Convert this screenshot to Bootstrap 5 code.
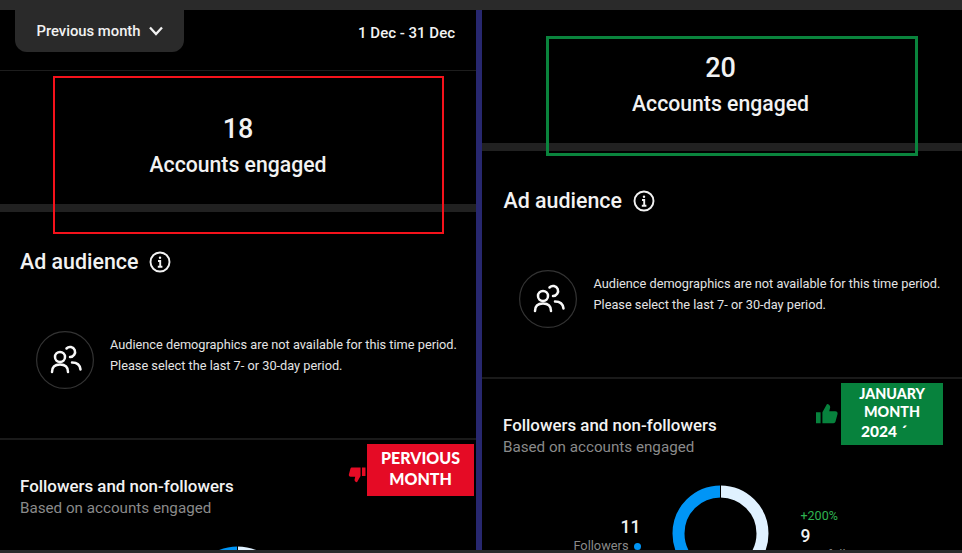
<!DOCTYPE html>
<html lang="en">
<head>
  <meta charset="UTF-8" />
  <meta name="viewport" content="width=device-width, initial-scale=1.0"/>
  <title>Accounts engaged - comparison</title>
  <link href="https://cdn.jsdelivr.net/npm/bootstrap@5.3.3/dist/css/bootstrap.min.css" rel="stylesheet">
  <style>
    html, body { height: 553px; overflow: hidden; background: #000; }
    body { font-family: Roboto, "Liberation Sans", sans-serif; color: #f2f2f2; }
    .edge-top { height: 10px; background: #2a2a2a; flex: none; }
    .edge-bottom { height: 3px; background: #2a2a2a; flex: none; }
    .panels { height: 540px; }
    .panel-left { width: 476px; flex: none; }
    .panel-gap { width: 6px; flex: none; background: #27276f; }
    .panel-right { flex: 1 1 0; min-width: 0; }

    .range-head { height: 61px; border-bottom: 1px solid #1d1d1d; padding: 0 21px 0 15px; }
    .range-btn { width: 169px; height: 42px; background: #2a2a2a; color: #f2f2f2; border: 0; border-radius: 0 0 12px 12px; font-size: 14.8px; font-weight: 500; }
    .range-date { font-size: 15px; font-weight: 500; line-height: 20px; margin-top: 13px; }

    .stat-block { height: 133px; padding-top: 44px; text-align: center; }
    .panel-right .stat-block { padding-right: 3px; }
    .stat-num { font-size: 27px; font-weight: 500; line-height: 28px; }
    .stat-label { font-size: 21.2px; font-weight: 500; line-height: 28px; margin-top: 8px; }
    .thick-rule { height: 8px; background: #212121; }

    .audience { height: 228px; padding: 38px 20px 0 20px; border-bottom: 2px solid #1a1a1a; }
    .panel-right .audience { padding-left: 21.5px; }
    .audience-title { font-size: 21.4px; font-weight: 500; line-height: 24px; gap: 11px; }
    .audience-row { margin: 57px 0 0 16px; gap: 16px; }
    .panel-right .audience-row { margin-left: 15px; gap: 17px; }
    .audience-text { font-size: 12.75px; line-height: 21px; color: #e4e4e4; white-space: nowrap; margin-top: 3px; }

    .followers { padding: 35px 20px 0 20px; }
    .panel-right .followers { padding-left: 21px; }
    .followers-title { font-size: 16.9px; font-weight: 500; line-height: 22px; }
    .followers-sub { font-size: 15.2px; line-height: 22px; color: #8a8a8a; }

    .donut-row { height: 100px; margin-top: 27px; }
    .donut-left { width: 137.5px; padding-top: 32px; text-align: right; }
    .donut-right { padding: 21px 0 0 32px; }
    .donut-num { font-size: 17.5px; font-weight: 500; line-height: 20px; }
    .donut-key { font-size: 12.8px; line-height: 17px; color: #8a8a8a; white-space: nowrap; }
    .donut-dot { display: inline-block; width: 7px; height: 7px; border-radius: 50%; background: #0095f6; margin-left: 5px; }
    .donut-up { font-size: 12.5px; line-height: 20px; color: #2fb350; }
    .donut-chart { margin-left: 31px; flex: none; }

    .mark-box { position: absolute; }
    .mark-red { left: 53px; top: 66px; width: 391px; height: 158px; border: 2px solid #f5121b; }
    .mark-green { left: 64px; top: 26px; width: 372px; height: 120px; border: 3px solid #0a843d; }
    .tag-text { position: absolute; color: #fff; font-family: Lato, sans-serif; font-weight: 900; text-align: center; }
    .tag-red { left: 367px; top: 434px; width: 107px; height: 52px; background: #e50b25; font-size: 16px; line-height: 20.5px; padding-top: 4px; }
    .tag-green { left: 359px; top: 373px; width: 102px; height: 62px; background: #07823d; font-size: 14.3px; line-height: 18.3px; padding-top: 2px; }
    .tag-line-left { display: block; text-align: left; padding-left: 20px; font-size: 15.5px; }
    .thumb-mark { position: absolute; }
    .thumb-down { left: 347.5px; top: 456px; transform: rotate(180deg); }
    .thumb-up { left: 334px; top: 393px; }
  </style>
</head>
<body class="d-flex flex-column">
  <div class="edge-top"></div>

  <div class="panels d-flex">
    <!-- previous month -->
    <div class="panel-left position-relative overflow-hidden">
      <div class="range-head d-flex justify-content-between align-items-start">
        <button type="button" class="range-btn d-flex align-items-center justify-content-center gap-2 p-0">
          Previous month
          <svg width="14" height="10" viewBox="0 0 14 10" fill="none" stroke="#f2f2f2" stroke-width="2.3"><path d="M1 1.500l6 6.500 6-6.500"/></svg>
        </button>
        <span class="range-date">1 Dec - 31 Dec</span>
      </div>
      <div class="stat-block">
        <div class="stat-num">18</div>
        <div class="stat-label">Accounts engaged</div>
      </div>
      <div class="thick-rule"></div>
      <div class="audience">
        <div class="audience-title d-flex align-items-center">
          Ad audience
          <svg width="22" height="22" viewBox="0 0 22 22" fill="none" stroke="#f2f2f2" stroke-width="1.9"><circle cx="11" cy="11" r="9.500"/><path d="M9 10h2.200v5.500M8.800 15.700h4.600"/><circle cx="11" cy="6.800" r="1.200" fill="#f2f2f2" stroke="none"/></svg>
        </div>
        <div class="audience-row d-flex align-items-start">
          <svg class="flex-shrink-0" width="58" height="58" viewBox="0 0 58 58" fill="none" stroke="#f8f8f8" stroke-width="2.500" stroke-linecap="round"><circle cx="29" cy="29" r="28.400" stroke="#333" stroke-width="1.200"/><circle cx="24" cy="26" r="5"/><path d="M16 41c0-5 3-7.500 8-7.500s8 2.500 8 7.500"/><path d="M30.500 17.500a5 5 0 1 1 3.500 8.500"/><path d="M36 31.500c5 0 8 2.500 8.500 7"/></svg>
          <div class="audience-text">Audience demographics are not available for this time period.<br>Please select the last 7- or 30-day period.</div>
        </div>
      </div>
      <div class="followers">
        <div class="followers-title">Followers and non-followers</div>
        <div class="followers-sub">Based on accounts engaged</div>
        <div class="donut-row d-flex">
          <div class="donut-left"></div>
          <svg class="donut-chart" width="97" height="97" viewBox="0 0 97 97" fill="none" stroke-width="12"><path d="M48.500 6.500a42 42 0 0 1 0 84" stroke="#e0f1ff"/><path d="M48.500 90.500a42 42 0 0 1 0-84" stroke="#0095f6"/><path d="M48.500 0v13" stroke="#000" stroke-width="1"/></svg>
        </div>
      </div>
      <div class="mark-box mark-red"></div>
      <div class="tag-text tag-red">PERVIOUS<br>MONTH</div>
      <svg class="thumb-mark thumb-down" width="18" height="17" viewBox="0 0 24 24" fill="#e50b25"><path d="M0 10h5v12H0zM7 10l5-9c2 0 3.500 1.500 3.500 3.500L14.500 9H21c1.800 0 2.900 1.300 2.500 3l-2.200 8.200c-.3 1.100-1.200 1.800-2.300 1.800H7z"/></svg>
    </div>

    <div class="panel-gap"></div>

    <!-- January 2024 -->
    <div class="panel-right position-relative overflow-hidden">
      <div class="stat-block">
        <div class="stat-num">20</div>
        <div class="stat-label">Accounts engaged</div>
      </div>
      <div class="thick-rule"></div>
      <div class="audience">
        <div class="audience-title d-flex align-items-center">
          Ad audience
          <svg width="22" height="22" viewBox="0 0 22 22" fill="none" stroke="#f2f2f2" stroke-width="1.9"><circle cx="11" cy="11" r="9.500"/><path d="M9 10h2.200v5.500M8.800 15.700h4.600"/><circle cx="11" cy="6.800" r="1.200" fill="#f2f2f2" stroke="none"/></svg>
        </div>
        <div class="audience-row d-flex align-items-start">
          <svg class="flex-shrink-0" width="58" height="58" viewBox="0 0 58 58" fill="none" stroke="#f8f8f8" stroke-width="2.500" stroke-linecap="round"><circle cx="29" cy="29" r="28.400" stroke="#333" stroke-width="1.200"/><circle cx="24" cy="26" r="5"/><path d="M16 41c0-5 3-7.500 8-7.500s8 2.500 8 7.500"/><path d="M30.500 17.500a5 5 0 1 1 3.500 8.500"/><path d="M36 31.500c5 0 8 2.500 8.500 7"/></svg>
          <div class="audience-text">Audience demographics are not available for this time period.<br>Please select the last 7- or 30-day period.</div>
        </div>
      </div>
      <div class="followers">
        <div class="followers-title">Followers and non-followers</div>
        <div class="followers-sub">Based on accounts engaged</div>
        <div class="donut-row d-flex">
          <div class="donut-left">
            <div class="donut-num">11</div>
            <div class="donut-key">Followers<span class="donut-dot"></span></div>
          </div>
          <svg class="donut-chart" width="97" height="97" viewBox="0 0 97 97" fill="none" stroke-width="12"><path d="M48.500 6.500a42 42 0 0 1 0 84" stroke="#e0f1ff"/><path d="M48.500 90.500a42 42 0 0 1 0-84" stroke="#0095f6"/><path d="M48.500 0v13" stroke="#000" stroke-width="1"/></svg>
          <div class="donut-right">
            <div class="donut-up">+200%</div>
            <div class="donut-num">9</div>
            <div class="donut-key">Non-followers</div>
          </div>
        </div>
      </div>
      <div class="mark-box mark-green"></div>
      <div class="tag-text tag-green">JANUARY<br>MONTH<br><span class="tag-line-left">2024 ´</span></div>
      <svg class="thumb-mark thumb-up" width="22" height="22" viewBox="0 0 24 24" fill="#07823d"><path d="M0 10h5v12H0zM7 10l5-9c2 0 3.500 1.500 3.500 3.500L14.500 9H21c1.800 0 2.900 1.300 2.500 3l-2.200 8.200c-.3 1.100-1.200 1.800-2.300 1.800H7z"/></svg>
    </div>
  </div>

  <div class="edge-bottom"></div>
  <script src="https://cdn.jsdelivr.net/npm/bootstrap@5.3.3/dist/js/bootstrap.bundle.min.js"></script>
</body>
</html>
